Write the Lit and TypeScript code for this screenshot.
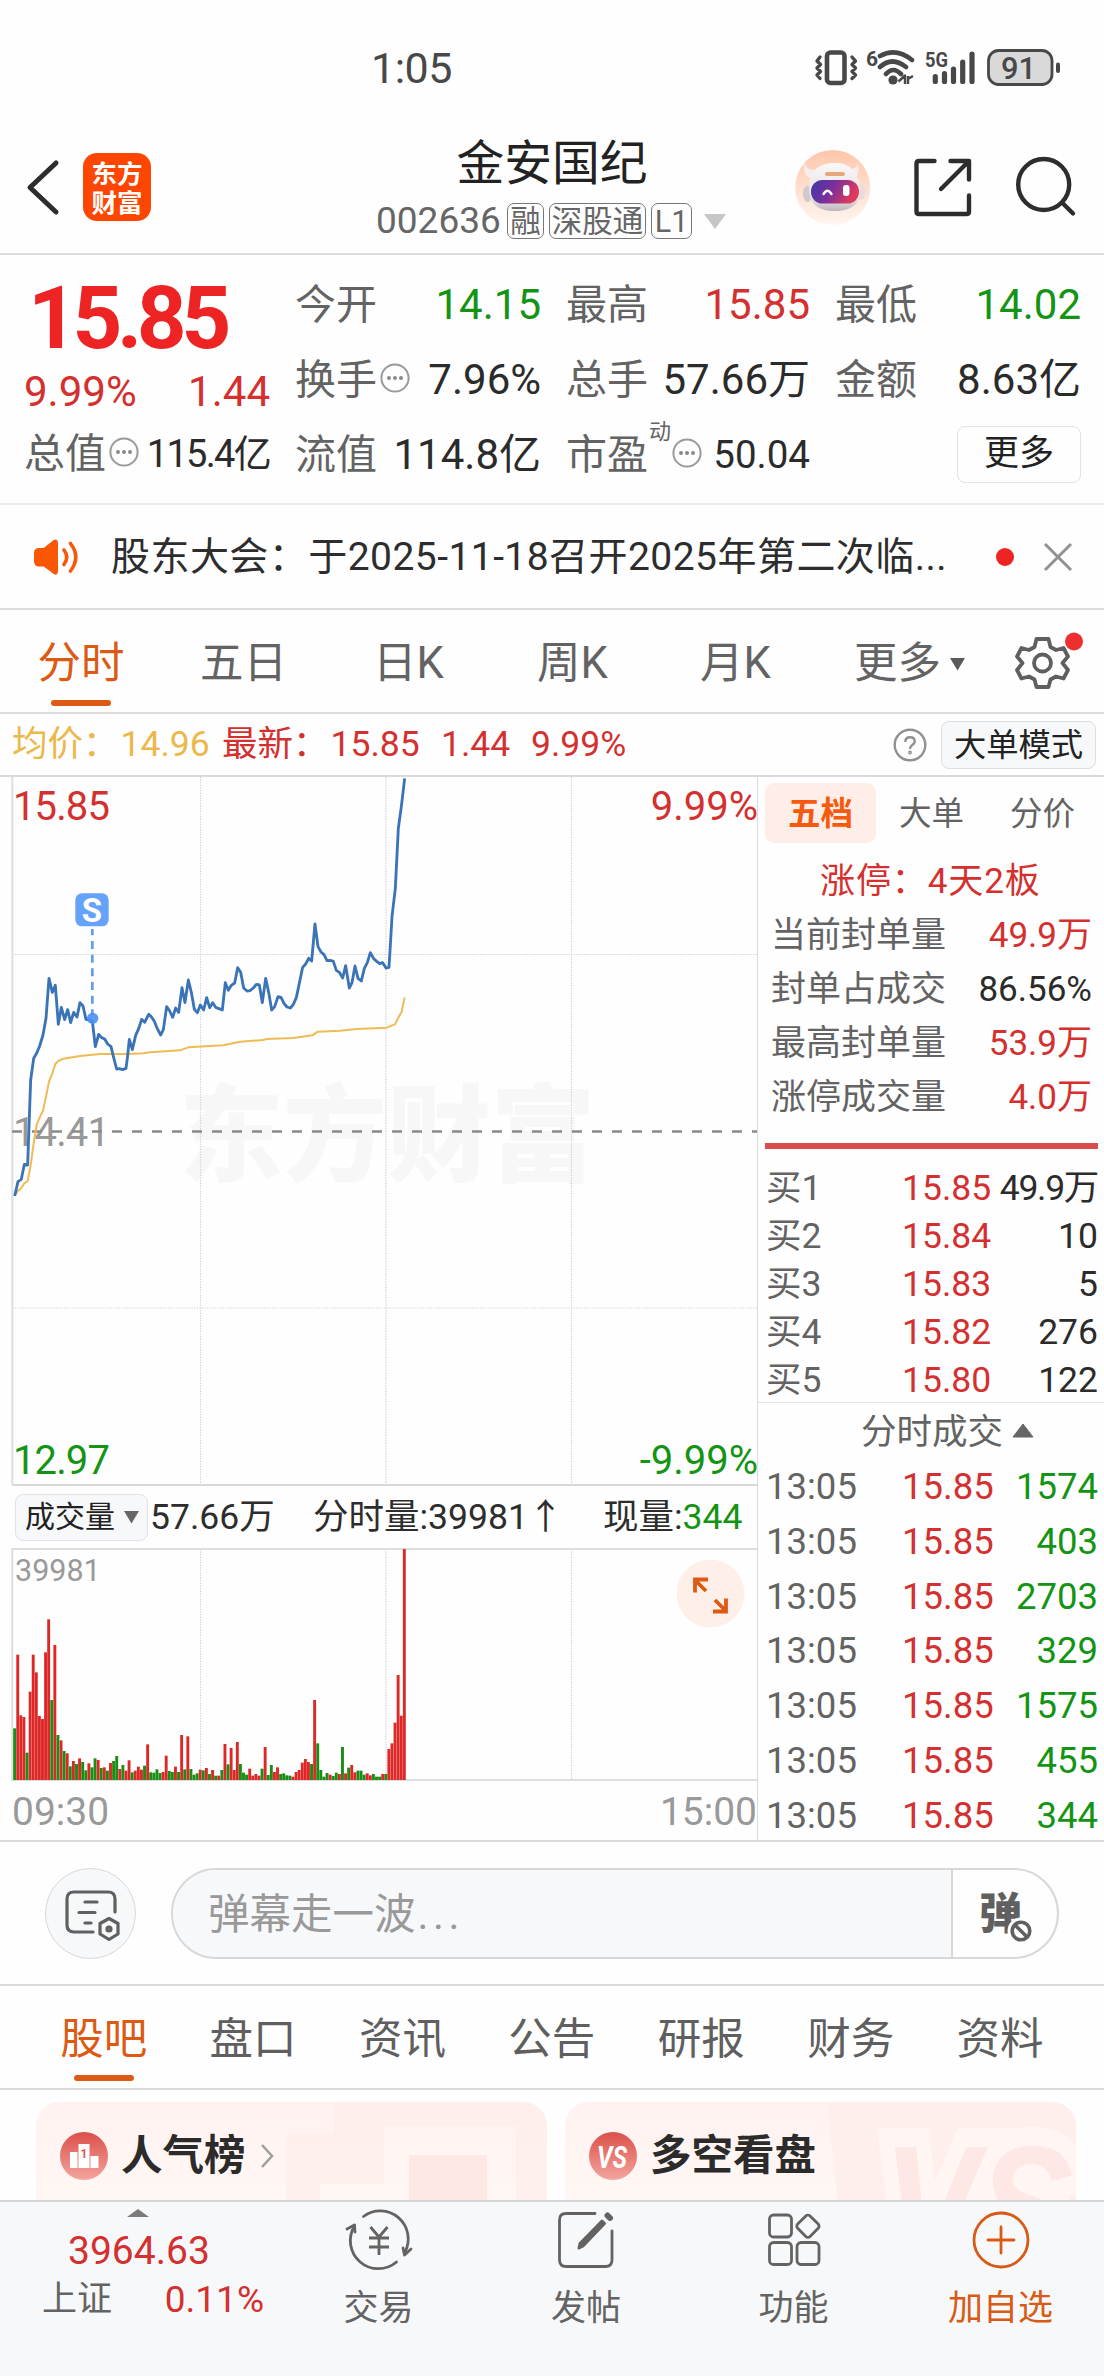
import { LitElement, html, svg, css } from "lit";
import { customElement } from "lit/decorators.js";

const PRICE =
  "44,1308 54,1265 64,1258 73,1213 83,1215 87,1100 92,960 101,895 110,880 119,858 129,825 138,775 147,655 157,697 166,676 175,793 184,742 194,779 203,749 212,788 221,757 231,771 240,728 249,738 258,778 267,780 277,783 286,860 296,823 305,833 314,837 323,852 333,860 342,897 350,927 358,926 368,929 378,925 382,895 388,838 397,869 407,826 416,806 425,778 434,787 446,763 453,769 463,784 472,806 482,825 490,809 500,740 509,753 518,772 527,744 536,757 546,683 555,728 565,660 574,697 583,748 592,758 601,735 611,750 620,713 629,743 638,728 648,743 657,746 667,750 676,668 685,691 694,676 704,669 713,623 722,637 731,684 741,693 750,692 760,684 769,673 778,675 787,728 797,655 806,697 815,750 824,740 834,710 843,712 852,730 861,741 871,744 880,733 889,713 898,670 908,622 917,612 926,595 935,603 945,492 954,560 963,576 972,584 981,602 991,601 1000,604 1009,631 1018,637 1028,654 1037,617 1048,684 1056,668 1065,618 1074,655 1084,663 1093,625 1102,608 1111,578 1121,596 1130,604 1139,611 1148,608 1158,624 1167,622 1172,540 1176,470 1186,385 1195,205 1204,140 1214,55";
const AVERAGE =
  "44,1306 54,1293 64,1284 73,1270 83,1263 92,1215 101,1150 110,1095 119,1073 129,1052 138,1010 147,965 157,940 166,912 175,903 190,896 240,888 300,882 380,882 430,880 450,877 540,871 565,862 670,856 720,845 790,840 800,837 880,834 937,826 953,815 1020,812 1070,807 1160,803 1185,793 1195,773 1205,755 1214,712";

/* One entry per minute: bar top and direction (r = up, g = down). */
const VOLUME =
  "745g 524r 706r 711r 818g 635r 524r 577r 708r 717r 517r 418r 660g 495r 765g 781r 813g 820r 859g 843r 852g 835r 846g 871g 850r 862g 835g 840r 864g 862r 872g 849r 843g 828g 867r 855g 872r 841r 877g 872r 860r 869r 857g 793r 877g 878g 868g 879g 876r 827r 873g 876g 860r 876g 765r 868g 769r 867g 884g 880g 869r 871g 864r 882g 870r 887g 887r 870g 792r 853g 804r 870r 786r 852g 878g 884g 866r 887r 882r 887r 866g 801r 885g 855g 876r 862r 882g 880g 886g 887g 890r 876r 870r 848r 837r 846r 852g 660r 790g 870g 890g 879g 884r 888g 878g 882r 801g 880r 863g 855r 877r 872g 872g 884g 880r 886r 882g 890g 890g 882r 882g 807r 790r 728r 585r 707r 207r".split(
    " "
  );

const SEAL = [
  ["当前封单量", "49.9万", "red"],
  ["封单占成交", "86.56%", "dark"],
  ["最高封单量", "53.9万", "red"],
  ["涨停成交量", "4.0万", "red"],
];
const BIDS = [
  ["买1", "15.85", "49.9万"],
  ["买2", "15.84", "10"],
  ["买3", "15.83", "5"],
  ["买4", "15.82", "276"],
  ["买5", "15.80", "122"],
];
const TRADES = ["1574", "403", "2703", "329", "1575", "455", "344"];

const base = css`
  * {
    box-sizing: border-box;
  }
  :host {
    display: block;
    font-family: Roboto, "Noto Sans CJK SC", sans-serif;
    line-height: 1.2;
  }
  svg {
    display: block;
    flex: none;
  }
  .red {
    color: #d3302f;
  }
  .green {
    color: #149414;
  }
  .dark {
    color: #2b2b2b;
  }
`;

const dots = html`<svg width="30" height="30" viewBox="0 0 30 30">
  <circle cx="15" cy="15" r="13.6" fill="none" stroke="#999" stroke-width="2" />
  <g fill="#8a8a8a"><circle cx="9" cy="15" r="2" /><circle cx="15" cy="15" r="2" /><circle cx="21" cy="15" r="2" /></g>
</svg>`;

@customElement("status-bar")
class StatusBar extends LitElement {
  static styles = [
    base,
    css`
      .bar {
        height: 120px;
        display: flex;
        align-items: flex-start;
        padding-top: 45px;
        color: #484848;
      }
      .clock {
        width: 443px;
        padding-left: 371px;
        font-size: 43px;
        line-height: 46px;
        margin-right: 368px;
        white-space: nowrap;
        letter-spacing: -0.5px;
      }
    `,
  ];
  render() {
    return html`<div class="bar">
      <div class="clock">1:05</div>
      <svg width="252" height="46" viewBox="811 45 252 46" fill="none" stroke="#484848" stroke-width="3.4" stroke-linecap="round" stroke-linejoin="round">
        <rect x="827" y="52.5" width="17.5" height="30.5" rx="3.5" stroke-width="4.6" />
        <path d="M820 57 l-3 4 3.500 3.500 -3.500 3.500 3.500 3.500 -3.500 3.500 3 3.500 M852 57 l3.500 4 -3.500 3.500 3.500 3.500 -3.500 3.500 3.500 3.500 -3.500 3.500" />
        <text x="866" y="66" font-size="21" font-weight="700" fill="#484848" stroke="none" textLength="11">6</text>
        <g stroke-width="4.600">
          <path d="M880 56 Q896 47 912 60 M880 67 Q892 56 906 67 M886 74 Q893 66 901 74" />
        </g>
        <circle cx="893" cy="80" r="4.600" fill="#484848" stroke="none" />
        <path d="M898.500 81.500 L905 75.500 V84 M908 76 V84 M908 79 L913 76" stroke-width="2.400" stroke-linecap="butt" />
        <text x="925" y="67" font-size="21" font-weight="700" fill="#484848" stroke="none" textLength="23" lengthAdjust="spacingAndGlyphs">5G</text>
        <path d="M935.300 76.500 V81.500 M944.500 73.500 V81.500 M953.500 69 V81.500 M962.700 62 V81.500 M972 54 V81.500" stroke-width="5.200" />
        <rect x="988.500" y="50.500" width="63.500" height="34" rx="10" fill="#d9d9d9" stroke-width="2.800" />
        <path d="M1058 64.500 V71" stroke-width="4" />
        <text x="1001" y="79" font-size="32" font-weight="500" fill="#484848" stroke="none" textLength="35" lengthAdjust="spacingAndGlyphs">91</text>
      </svg>
    </div>`;
  }
}

@customElement("stock-header")
class StockHeader extends LitElement {
  static styles = [
    base,
    css`
      .head {
        height: 135px;
        display: flex;
        border-bottom: 2px solid #dcdcdc;
      }
      .left {
        width: 376px;
        display: flex;
        align-items: center;
        padding-left: 24px;
      }
      .logo {
        width: 68px;
        height: 68px;
        margin-left: 21px;
        border-radius: 14px;
        background: #ff4600;
        color: #fff;
        font: 700 25.500px/29px "Noto Sans CJK SC", sans-serif;
        text-align: center;
        padding-top: 4px;
      }
      .mid {
        width: 352px;
      }
      .name {
        font-size: 47.800px;
        line-height: 60px;
        margin-top: 14px;
        text-align: center;
        color: #222;
      }
      .code {
        display: flex;
        align-items: center;
        height: 36px;
        margin-top: 9px;
        color: #666;
        font-size: 37px;
        gap: 5px;
      }
      .num {
        width: 126px;
      }
      .tag {
        border: 1.6px solid #777;
        border-radius: 7px;
        height: 36px;
        font-size: 30.5px;
        line-height: 35px;
        width: 37px;
        text-align: center;
        white-space: nowrap;
      }
      .wide {
        width: 97px;
      }
      .l1 {
        width: 41px;
      }
      .right {
        display: flex;
        align-items: center;
        padding-left: 67px;
      }
      .share {
        margin-left: 40px;
      }
      .search {
        margin-left: 40px;
      }
    `,
  ];
  render() {
    return html`<div class="head">
      <div class="left">
        <svg width="38" height="60" viewBox="24 157 38 60" fill="none" stroke="#2d2d2d" stroke-width="5" stroke-linecap="round" stroke-linejoin="round">
          <path d="M56 163 L30 187.500 L56 212" />
        </svg>
        <div class="logo">东方<br />财富</div>
      </div>
      <div class="mid">
        <div class="name">金安国纪</div>
        <div class="code">
          <span class="num">002636</span><span class="tag">融</span><span class="tag wide">深股通</span><span class="tag l1">L1</span>
          <svg width="30" height="18" viewBox="0 0 30 18"><path d="M7 2 H29 L18 17 Z" fill="#c6c6c6" /></svg>
        </div>
      </div>
      <div class="right">
        <svg width="76" height="76" viewBox="795 149 76 76">
          <defs>
            <linearGradient id="halo" x1="0" y1="0" x2="0" y2="1"><stop offset="0" stop-color="#ffc6aa" /><stop offset="1" stop-color="#fff6f0" /></linearGradient>
            <linearGradient id="face" x1="0" y1="0" x2="1" y2="0.3"><stop offset="0" stop-color="#3d3aa8" /><stop offset=".5" stop-color="#7a2f9c" /><stop offset="1" stop-color="#e03a5c" /></linearGradient>
            <linearGradient id="shell" x1="0" y1="0" x2="0" y2="1"><stop offset="0" stop-color="#fbf8f8" /><stop offset=".75" stop-color="#e6e0e2" /><stop offset="1" stop-color="#bdb7bd" /></linearGradient>
          </defs>
          <circle cx="832.700" cy="187.500" r="37.500" fill="url(#halo)" />
          <path d="M804 163 C803 172 806 178 812 178 L819 170 C811 171 806 168 804 163 Z M858 163 C860 172 857 178 853 178 L846 169 C853 170 857 168 858 163 Z" fill="#f4eeee" />
          <ellipse cx="807.500" cy="194" rx="4.500" ry="8" fill="#cfc8cc" /><ellipse cx="861" cy="192" rx="4.500" ry="8" fill="#e9dcdc" />
          <path d="M809 188 C809 170 820 163 835 163 C851 163 859 173 860 190 C861 204 851 211 835 211 C817 211 809 203 809 188 Z" fill="url(#shell)" />
          <rect x="811" y="180" width="48" height="23.500" rx="11.500" fill="url(#face)" />
          <rect x="825" y="172" width="20" height="4" rx="2" fill="#e6a878" />
          <path d="M823.500 194 Q827.500 187.500 831.500 194" fill="none" stroke="#fff" stroke-width="2.400" stroke-linecap="round" />
          <rect x="843" y="185" width="6.500" height="11" rx="3" fill="#fff" />
        </svg>
        <svg class="share" width="62" height="62" viewBox="909 156 62 62" fill="none" stroke="#2d2d2d" stroke-width="4.400" stroke-linecap="round" stroke-linejoin="round">
          <path d="M932.500 161 H917 Q914.500 161 914.500 163.500 V211.500 Q914.500 214 917 214 H964.500 Q967 214 967 211.500 V195.500 M948.500 161 H967 V179.500 M966 162 L939 189" />
        </svg>
        <svg class="search" width="66" height="66" viewBox="1012 154 66 66" fill="none" stroke="#2d2d2d" stroke-width="4.400" stroke-linecap="round">
          <circle cx="1042.700" cy="184.500" r="25.500" /><path d="M1061.500 203 L1072 213.500" />
        </svg>
      </div>
    </div>`;
  }
}

@customElement("quote-board")
class QuoteBoard extends LitElement {
  static styles = [
    base,
    css`
      .board {
        height: 250px;
        display: flex;
        padding: 13px 23px 0 24px;
        border-bottom: 2px solid #ececec;
        color: #2b2b2b;
        font-size: 42px;
      }
      .col {
        width: 246px;
        margin-right: 25px;
      }
      .lead {
        width: 246px;
      }
      .c3 {
        width: 244px;
      }
      .c4 {
        width: 246px;
        margin-right: 0;
      }
      .row {
        height: 75px;
        display: flex;
        justify-content: space-between;
        align-items: center;
        white-space: nowrap;
      }
      .label {
        display: flex;
        align-items: center;
        color: #636363;
        font-size: 41px;
      }
      .label svg {
        margin-left: 3px;
        margin-top: -6px;
      }
      .big {
        height: 99px;
        line-height: 100px;
        font-size: 87px;
        font-weight: 700;
        letter-spacing: -5.4px;
        color: #ee2323;
        padding-left: 4px;
      }
      .chg {
        height: 50px;
        display: flex;
        justify-content: space-between;
        align-items: center;
      }
      .s {
        font-size: 38.500px;
      }
      .tight {
        font-size: 38px;
        letter-spacing: -1.700px;
      }
      .dyn {
        font-size: 22px;
        align-self: flex-start;
        margin: -12px -2px 0 1px;
      }
      .more {
        margin-left: auto;
        width: 124px;
        height: 57px;
        line-height: 54px;
        margin-top: -3px;
        border: 1.500px solid #e0e2e3;
        border-radius: 8px;
        text-align: center;
        font-size: 35px;
        color: #222;
      }
    `,
  ];
  render() {
    return html`<div class="board">
      <div class="col lead">
        <div class="big">15.85</div>
        <div class="chg red"><span>9.99%</span><span>1.44</span></div>
        <div class="row"><span class="label">总值${dots}</span><span class="tight">115.4亿</span></div>
      </div>
      <div class="col">
        <div class="row"><span class="label">今开</span><span class="green">14.15</span></div>
        <div class="row"><span class="label">换手${dots}</span><span>7.96%</span></div>
        <div class="row"><span class="label">流值</span><span>114.8亿</span></div>
      </div>
      <div class="col c3">
        <div class="row"><span class="label">最高</span><span class="red">15.85</span></div>
        <div class="row"><span class="label">总手</span><span>57.66万</span></div>
        <div class="row"><span class="label">市盈<span class="dyn">动</span>${dots}</span><span class="s">50.04</span></div>
      </div>
      <div class="col c4">
        <div class="row"><span class="label">最低</span><span class="green">14.02</span></div>
        <div class="row"><span class="label">金额</span><span>8.63亿</span></div>
        <div class="row"><span class="more">更多</span></div>
      </div>
    </div>`;
  }
}

@customElement("notice-line")
class NoticeLine extends LitElement {
  static styles = [
    base,
    css`
      .line {
        height: 105px;
        display: flex;
        align-items: center;
        border-bottom: 2px solid #dcdcdc;
        padding-left: 32px;
      }
      .text {
        width: 842px;
        margin-left: 31px;
        font-size: 39px;
        letter-spacing: 0.450px;
        color: #2d2d2d;
        white-space: nowrap;
        line-height: 50px;
      }
      .dot {
        width: 18px;
        height: 18px;
        margin: 1px 27px 0 43px;
        border-radius: 50%;
        background: #ee2323;
      }
    `,
  ];
  render() {
    return html`<div class="line">
      <svg width="48" height="40" viewBox="32 536 48 40" fill="none" stroke="#f95706" stroke-width="3.600" stroke-linecap="round">
        <path d="M38 548 H44 L54 540 Q57 538.500 57 542 V570 Q57 574 54 572 L44 564.500 H39 Q35 564.500 35 560 V552 Q35 548 39 548 Z" fill="#f95706" stroke-width="2" />
        <path d="M64 549 Q69.500 556 64 563.500 M70.500 542.500 Q81 556 70.500 570" />
      </svg>
      <div class="text">股东大会：于2025-11-18召开2025年第二次临...</div>
      <span class="dot"></span>
      <svg width="34" height="34" viewBox="0 0 34 34" stroke="#919191" stroke-width="3"><path d="M4 4 L30 30 M30 4 L4 30" /></svg>
    </div>`;
  }
}

@customElement("period-tabs")
class PeriodTabs extends LitElement {
  static styles = [
    base,
    css`
      .tabs {
        height: 104px;
        display: grid;
        grid-template-columns: 162px 163px 167px 161px 165px 174px 1fr;
        align-items: center;
        border-bottom: 2px solid #dcdcdc;
        color: #636363;
        font-size: 43.500px;
        line-height: 102px;
        text-align: center;
      }
      .tabs > span {
        padding-top: 3px;
      }
      .on {
        color: #dc5a14;
        display: flex;
        flex-direction: column;
        align-items: center;
      }
      .on::after {
        content: "";
        width: 60px;
        height: 6px;
        border-radius: 3px;
        background: #dc5a14;
        margin-top: -15px;
        margin-bottom: 9px;
      }
      .more {
        display: flex;
        align-items: center;
        justify-content: flex-end;
        padding-right: 26px;
        gap: 8px;
      }
      .gear {
        margin-left: 8px;
      }
    `,
  ];
  render() {
    return html`<div class="tabs">
      <span class="on">分时</span><span>五日</span><span>日K</span><span>周K</span><span>月K</span>
      <span class="more">更多<svg width="17" height="14" viewBox="0 0 17 14"><path d="M1 1 H16 L8.500 13.500 Z" fill="#5a5a5a" /></svg></span>
      <svg class="gear" width="92" height="80" viewBox="1000 621.500 92 80" fill="none" stroke="#5f5f5f" stroke-width="3.800" stroke-linejoin="round">
        <path d="M1036.500 637.500 H1048.500 L1050.500 645.500 L1056 648.500 L1063.500 646.500 L1068 655 L1062.500 661.500 L1068 668.500 L1063.500 677 L1056 675 L1050.500 678 L1048.500 685.500 H1036.500 L1034.500 678 L1029 675 L1021.500 677 L1017 668.500 L1022.500 661.500 L1017 655 L1021.500 646.500 L1029 648.500 L1034.500 645.500 Z" />
        <circle cx="1042.500" cy="661.500" r="8.500" />
        <circle cx="1074" cy="640" r="9" fill="#ee2f2f" stroke="none" />
      </svg>
    </div>`;
  }
}

@customElement("info-row")
class InfoRow extends LitElement {
  static styles = [
    base,
    css`
      .row {
        height: 63px;
        display: flex;
        align-items: center;
        padding-left: 12px;
        font-size: 35.500px;
        border-bottom: 2px solid #d9dadb;
        white-space: nowrap;
      }
      .avg {
        width: 210px;
        color: #ebb84a;
      }
      .gap {
        margin-left: 2px;
      }
      .group {
        width: 412px;
        display: flex;
        flex: none;
      }
      .last {
        width: 219px;
        flex: none;
      }
      .chg {
        width: 90px;
        flex: none;
      }
      svg {
        margin-left: 259px;
      }
      .mode {
        margin-left: 14px;
        width: 155px;
        height: 48px;
        line-height: 47px;
        border: 1.500px solid #dcdee0;
        border-radius: 8px;
        background: #f7f8fa;
        font-size: 32.300px;
        text-align: center;
        color: #222;
      }
    `,
  ];
  render() {
    return html`<div class="row">
      <span class="avg">均价：<span class="gap">14.96</span></span>
      <span class="group red"><span class="last">最新：<span class="gap">15.85</span></span><span class="chg">1.44</span><span>9.99%</span></span>
      <svg width="34" height="34" viewBox="0 0 34 34" fill="none" stroke="#919191" stroke-width="2.400">
        <circle cx="17" cy="17" r="15.300" /><path d="M12.300 14 Q12.300 9.300 17 9.300 Q21.700 9.300 21.700 13.300 Q21.700 15.600 19 17.200 Q17 18.500 17 21" /><circle cx="17" cy="24.500" r="0.700" />
      </svg>
      <span class="mode">大单模式</span>
    </div>`;
  }
}

@customElement("minute-chart")
class MinuteChart extends LitElement {
  static styles = [
    base,
    css`
      :host {
        width: 757px;
      }
      .vol-head {
        height: 62px;
        display: flex;
        align-items: center;
        padding-left: 15px;
        font-size: 35.500px;
        color: #2d2d2d;
        white-space: nowrap;
      }
      .pick {
        width: 133px;
        height: 47px;
        display: flex;
        align-items: center;
        gap: 9px;
        border: 1.500px solid #e0e2e5;
        border-radius: 8px;
        background: #f7f8fa;
        padding-left: 9px;
        font-size: 30px;
        color: #222;
        margin-right: 2px;
      }
      .total {
        width: 163px;
      }
      .minute {
        width: 290px;
      }
      .times {
        height: 58px;
        display: flex;
        justify-content: space-between;
        align-items: center;
        padding: 2px 0 0 12px;
        font-size: 39px;
        color: #999;
      }
      text {
        font-family: Roboto, "Noto Sans CJK SC", sans-serif;
      }
    `,
  ];
  grid(y1: number, y2: number) {
    return [200.5, 386, 571.5].map(
      (x) => svg`<path d="M${x} ${y1} V${y2}" stroke="#d2d2d2" stroke-width="1.2" stroke-dasharray="1.3 1.3"/>`
    );
  }
  render() {
    return html`
      <svg width="757" height="709" viewBox="0 777 757 709">
        <text x="179" y="1173" font-size="106" font-weight="900" fill="#f7f7f7" textLength="416" lengthAdjust="spacingAndGlyphs">东方财富</text>
        ${this.grid(777, 1484)}
        <path d="M12 954.500 H757 M12 1308 H757" stroke="#d2d2d2" stroke-width="1.200" stroke-dasharray="1.300 1.300" />
        <path d="M12.300 777 V1485" stroke="#dedede" stroke-width="2" />
        <path d="M12 1485 H757" stroke="#d9d9d9" stroke-width="2" />
        <text x="13" y="1146" font-size="40" letter-spacing="-0.9" fill="#999">14.41</text>
        <path d="M12 1131.500 H757" stroke="#8a8a8a" stroke-width="2.400" stroke-dasharray="10 10" />
        <g transform="translate(0 760) scale(.33333)" fill="none" stroke-linejoin="round">
          <polyline points=${AVERAGE} stroke="#efbb55" stroke-width="6" />
          <polyline points=${PRICE} stroke="#3a74b6" stroke-width="8.500" />
          <path d="M277 507 V765" stroke="#5f9df0" stroke-width="8" stroke-dasharray="24 17" stroke-dashoffset="5" />
          <circle cx="278" cy="775" r="17" fill="#4a8ff5" fill-opacity=".9" />
          <rect x="226" y="400" width="100" height="99" rx="20" fill="#65a3fb" />
        </g>
        <text x="92" y="922" font-size="33" font-weight="700" fill="#fff" text-anchor="middle">S</text>
        <g font-size="40">
          <text x="13" y="819.500" letter-spacing="-0.9" fill="#d3302f">15.85</text>
          <text x="758" y="819.500" fill="#d3302f" text-anchor="end">9.99%</text>
          <text x="13" y="1474" letter-spacing="-0.9" fill="#149414">12.97</text>
          <text x="758" y="1474" fill="#149414" text-anchor="end">-9.99%</text>
        </g>
      </svg>
      <div class="vol-head">
        <span class="pick">成交量<svg width="15" height="13" viewBox="0 0 15 13"><path d="M0 0 H15 L7.500 12.500 Z" fill="#666" /></svg></span>
        <span class="total">57.66万</span><span class="minute">分时量:39981↑</span><span>现量:<span class="green">344</span></span>
      </div>
      <svg width="757" height="234" viewBox="0 1548 757 234">
        ${this.grid(1549, 1780)}
        <path d="M12.300 1781 V1549 H757 M12 1780 H757" fill="none" stroke="#dedede" stroke-width="2" />
        ${VOLUME.map((v, i) => {
          const top = 1480 + parseInt(v) / 3;
          return svg`<rect x=${13.2 + i * 3.0926} y=${top} width="2.9" height=${1780 - top} fill=${v.endsWith("r") ? "#dd2828" : "#1b8c14"}/>`;
        })}
        <text x="15" y="1581" font-size="30.500" fill="#999">39981</text>
        <circle cx="710.500" cy="1593.500" r="34" fill="#fef0e9" />
        <path d="M706 1591 L695 1580 M695 1592.500 V1579.500 H708 M715 1600 L726 1611 M726 1598.500 V1611.500 H713" fill="none" stroke="#dc5a14" stroke-width="3.800" />
      </svg>
      <div class="times"><span>09:30</span><span>15:00</span></div>
    `;
  }
}

@customElement("order-panel")
class OrderPanel extends LitElement {
  static styles = [
    base,
    css`
      :host {
        flex: 1;
        border-left: 1.500px solid #d9dadb;
        white-space: nowrap;
        color: #636363;
        font-size: 35px;
      }
      .tabs {
        display: flex;
        padding: 6px 0 0 7px;
        font-size: 32.500px;
        line-height: 62px;
        height: 66px;
        text-align: center;
      }
      .tabs span {
        width: 111px;
      }
      .tabs .on {
        background: #feeee7;
        border-radius: 9px;
        color: #f55a0f;
        font-weight: 700;
      }
      .limit {
        line-height: 52px;
        height: 66px;
        padding: 13px 0 0 62px;
        letter-spacing: 0.900px;
      }
      .seal {
        display: flex;
        justify-content: space-between;
        height: 54px;
        line-height: 54px;
        padding: 0 12px 0 13px;
      }
      .bar {
        height: 6px;
        background: #da4d4d;
        margin: 18px 6px 15px 7px;
      }
      .bid,
      .trade {
        display: grid;
        grid-template-columns: 136px 90px 1fr;
        height: 48px;
        line-height: 48px;
        padding: 0 6px 0 8px;
        font-size: 36.500px;
      }
      .bid {
        font-size: 35.500px;
      }
      .bid.wan .q {
        letter-spacing: -1.300px;
        padding-right: 0;
      }
      .trade {
        height: 54.800px;
        line-height: 54.800px;
        padding-right: 6px;
      }
      .q {
        text-align: right;
        margin-left: -10px;
      }
      .title {
        border-top: 1.500px solid #e4e4e4;
        height: 58px;
        line-height: 58px;
        display: flex;
        align-items: center;
        padding-left: 103px;
        margin-top: -2px;
        gap: 9px;
        font-size: 35.500px;
      }
      .title svg {
        margin-top: -2px;
      }
    `,
  ];
  render() {
    return html`
      <div class="tabs"><span class="on">五档</span><span>大单</span><span>分价</span></div>
      <div class="limit red">涨停：4天2板</div>
      ${SEAL.map(([k, v, c]) => html`<div class="seal"><span>${k}</span><span class=${c}>${v}</span></div>`)}
      <div class="bar"></div>
      ${BIDS.map(
        ([k, p, q]) =>
          html`<div class="bid ${q.endsWith("万") ? "wan" : ""}"><span>${k}</span><span class="red">${p}</span><span class="q dark">${q}</span></div>`
      )}
      <div class="title">分时成交<svg width="22" height="16" viewBox="0 0 22 16"><path d="M1 14 L11 1 L21 14 Z" fill="#666" stroke="#666" stroke-linejoin="round" /></svg></div>
      ${TRADES.map((q) => html`<div class="trade"><span>13:05</span><span class="red">15.85</span><span class="q green">${q}</span></div>`)}
    `;
  }
}

@customElement("danmu-bar")
class DanmuBar extends LitElement {
  static styles = [
    base,
    css`
      .bar {
        height: 146px;
        display: flex;
        align-items: center;
        padding-left: 45px;
        padding-top: 1px;
        border-top: 2px solid #d9dadb;
        border-bottom: 2px solid #d9dadb;
      }
      .round {
        width: 91px;
        height: 91px;
        border: 1.500px solid #d6d8da;
        border-radius: 50%;
        background: #f7f8fa;
        display: flex;
        align-items: center;
        justify-content: center;
      }
      .field {
        width: 888px;
        height: 91px;
        margin-left: 35px;
        border: 2px solid #d6d8da;
        border-radius: 46px;
        display: flex;
        overflow: hidden;
      }
      .input {
        width: 781px;
        background: #f7f8fa;
        border-right: 2px solid #d6d8da;
        padding-left: 35px;
        line-height: 90px;
        font-size: 41.500px;
        color: #999;
      }
      .dots {
        letter-spacing: 4.500px;
        margin-left: 2px;
      }
      text {
        font-family: "Noto Sans CJK SC", sans-serif;
      }
    `,
  ];
  render() {
    return html`<div class="bar">
      <div class="round">
        <svg width="60" height="60" viewBox="60 1884 60 60" fill="none" stroke="#606060" stroke-width="3.200" stroke-linecap="round" stroke-linejoin="round">
          <path d="M92 1932 H73 Q66 1932 66 1925 V1899 Q66 1892 73 1892 H107 Q114 1892 114 1899 V1912" />
          <path d="M84 1902 H96 M78 1912.500 H94 M84 1923 H90" />
          <path d="M108 1918.500 L117 1923.500 V1934 L108 1939.500 L99 1934 V1923.500 Z" />
          <circle cx="108" cy="1929" r="2" />
        </svg>
      </div>
      <div class="field">
        <div class="input">弹幕走一波<span class="dots">...</span></div>
        <svg width="104" height="87" viewBox="954 1870 104 87">
          <text x="980" y="1928.500" font-size="43" font-weight="900" fill="#606060">弹</text>
          <circle cx="1022" cy="1931" r="13.500" fill="#fff" />
          <circle cx="1022" cy="1931" r="8.800" fill="none" stroke="#606060" stroke-width="3.600" />
          <path d="M1016 1925 L1028 1937" stroke="#606060" stroke-width="3.600" />
        </svg>
      </div>
    </div>`;
  }
}

@customElement("section-tabs")
class SectionTabs extends LitElement {
  static styles = [
    base,
    css`
      .tabs {
        height: 104px;
        display: grid;
        grid-template-columns: repeat(7, 149.400px);
        padding-left: 29px;
        border-bottom: 2px solid #d9dadb;
        font-size: 43.500px;
        line-height: 107px;
        text-align: center;
        color: #5f5f5f;
      }
      .on {
        color: #dc5a14;
        display: flex;
        flex-direction: column;
        align-items: center;
      }
      .on::after {
        content: "";
        width: 60px;
        height: 6px;
        border-radius: 3px;
        background: #dc5a14;
        margin-top: -18px;
      }
    `,
  ];
  render() {
    return html`<div class="tabs">
      ${["股吧", "盘口", "资讯", "公告", "研报", "财务", "资料"].map((t, i) => html`<span class=${i === 0 ? "on" : ""}>${t}</span>`)}
    </div>`;
  }
}

@customElement("promo-cards")
class PromoCards extends LitElement {
  static styles = [
    base,
    css`
      .wrap {
        height: 110px;
        padding: 12px 28px 0 36px;
        display: grid;
        grid-template-columns: 511px 511px;
        gap: 18px;
        overflow: hidden;
      }
      .card {
        display: grid;
        height: 110px;
        border-radius: 24px 24px 0 0;
        background: linear-gradient(#fff2f0, #fff8f5);
        overflow: hidden;
      }
      .bg,
      .body {
        grid-area: 1 / 1;
      }
      .body {
        display: flex;
        align-items: center;
        height: 108px;
        padding-left: 24px;
        font-size: 41.500px;
        font-weight: 700;
        color: #2b2b2b;
      }
      .body span {
        margin: 0 14px 0 13px;
      }
    `,
  ];
  render() {
    const disc = svg`<defs><linearGradient id="d" x1="0" y1="0" x2="0" y2="1"><stop offset="0" stop-color="#db4f4a"/><stop offset="1" stop-color="#f3a59e"/></linearGradient></defs><circle cx="24" cy="24" r="24" fill="url(#d)"/>`;
    return html`<div class="wrap">
      <div class="card">
        <svg class="bg" width="511" height="110" viewBox="0 0 511 110">
          <path d="M250 32 H297 V0 H511 V110 H480 V24 H348 V82 H284 V110 H250 Z" fill="#feeeeb" opacity=".75" />
          <path d="M373 53 H451 V110 H373 Z" fill="#fde8e5" />
        </svg>
        <div class="body">
          <svg width="48" height="48" viewBox="0 0 48 48">
            ${disc}
            <path d="M10 20 H17.500 V36 H10 Z M18.500 12 H29.500 V36 H18.500 Z M30.500 24 H38.500 V36 H30.500 Z" fill="#fff" />
            <text x="24" y="26" font-size="12" font-weight="700" fill="#dc5650" text-anchor="middle">1</text>
          </svg>
          <span>人气榜</span>
          <svg width="14" height="26" viewBox="0 0 14 26" fill="none" stroke="#a0a0a0" stroke-width="2.600"><path d="M2 2 L12 13 L2 24" /></svg>
        </div>
      </div>
      <div class="card">
        <svg class="bg" width="511" height="110" viewBox="0 0 511 110">
          <path d="M262 0 H511 V110 H274 Z" fill="#feefed" />
          <text x="318" y="168" font-family="Liberation Sans" font-size="178" font-style="italic" font-weight="700" fill="#fde8e5" stroke="#fff5f2" stroke-width="38" paint-order="stroke" textLength="190" lengthAdjust="spacingAndGlyphs">VS</text>
        </svg>
        <div class="body">
          <svg width="48" height="48" viewBox="0 0 48 48">
            ${disc}
            <text x="8" y="35.500" font-size="31" font-style="italic" font-weight="700" fill="#fff" textLength="30" lengthAdjust="spacingAndGlyphs">VS</text>
          </svg>
          <span>多空看盘</span>
        </div>
      </div>
    </div>`;
  }
}

@customElement("bottom-nav")
class BottomNav extends LitElement {
  static styles = [
    base,
    css`
      .nav {
        height: 176px;
        display: grid;
        grid-template-columns: 275px 207px 208px 207px 207px;
        background: #f7f8fa;
        border-top: 2px solid #d3d5d8;
        color: #636363;
      }
      .index {
        padding: 6px 11px 0 42px;
      }
      .arrow {
        margin-left: 85px;
      }
      .value {
        font-size: 39px;
        line-height: 46px;
        margin-top: 11px;
        padding-left: 26px;
        color: #d3302f;
      }
      .pair {
        display: flex;
        justify-content: space-between;
        font-size: 35px;
        line-height: 46px;
        margin-top: 3px;
      }
      .pair .red {
        font-size: 37px;
      }
      .item {
        display: flex;
        flex-direction: column;
        align-items: center;
        padding-top: 6px;
        font-size: 35px;
        line-height: 50px;
        gap: 12px;
      }
      .item svg {
        fill: none;
        stroke: #636363;
        stroke-width: 2.800;
        stroke-linecap: round;
        stroke-linejoin: round;
      }
      .add {
        color: #d85a14;
      }
      .add svg {
        stroke: #d85a14;
      }
    `,
  ];
  render() {
    return html`<div class="nav">
      <div class="index">
        <svg class="arrow" width="22" height="9" viewBox="0 0 22 9"><path d="M0 9 L11 1 L22 9 Z" fill="#7a7a7a" /></svg>
        <div class="value">3964.63</div>
        <div class="pair"><span>上证</span><span class="red">0.11%</span></div>
      </div>
      <div class="item">
        <svg width="70" height="64" viewBox="-35 -32 70 64">
          <path d="M-15.500 -23.500 A28 28 0 0 1 26 12 M17.500 22 A28 28 0 0 1 -24.500 -14" />
          <path d="M-32 -11 L-24.500 -15 L-24 -8 M32 9 L25.500 15 L24 8" />
          <path d="M-8.500 -13 L0 -3 L8.500 -13 M0 -3 V15 M-10 -2 H10 M-10 7 H10" stroke-linecap="butt" />
        </svg>
        交易
      </div>
      <div class="item">
        <svg width="64" height="64" viewBox="-32 -32 64 64">
          <path d="M9 -26.500 H-20 Q-26.500 -26.500 -26.500 -20 V20 Q-26.500 26.500 -20 26.500 H19.500 Q26 26.500 26 20 V-9" />
          <path d="M-7 8 L-6 3.500 L16 -19 L18.500 -16.500 L-3 6 Z" fill="#636363" stroke-width="3" /><path d="M21.500 -24.500 L24 -22" stroke-width="6" />
        </svg>
        发帖
      </div>
      <div class="item">
        <svg width="64" height="64" viewBox="-32 -32 64 64">
          <rect x="-24.500" y="-25" width="22" height="22" rx="4" /><rect x="-24.500" y="2.500" width="22" height="22" rx="4" /><rect x="3" y="2.500" width="22" height="22" rx="4" />
          <rect x="5.200" y="-22.500" width="17.500" height="17.500" rx="3" transform="rotate(45 14 -13.800)" />
        </svg>
        功能
      </div>
      <div class="item add">
        <svg width="64" height="64" viewBox="-32 -32 64 64"><circle r="27" /><path d="M-13 0 H13 M0 -13 V13" /></svg>
        加自选
      </div>
    </div>`;
  }
}

@customElement("app-root")
class AppRoot extends LitElement {
  static styles = [
    base,
    css`
      :host {
        width: 1104px;
        height: 2376px;
        overflow: hidden;
        background: #fefefe;
      }
      .main {
        display: flex;
        height: 1063px;
      }
    `,
  ];
  render() {
    return html`
      <status-bar></status-bar>
      <stock-header></stock-header>
      <quote-board></quote-board>
      <notice-line></notice-line>
      <period-tabs></period-tabs>
      <info-row></info-row>
      <div class="main"><minute-chart></minute-chart><order-panel></order-panel></div>
      <danmu-bar></danmu-bar>
      <section-tabs></section-tabs>
      <promo-cards></promo-cards>
      <bottom-nav></bottom-nav>
    `;
  }
}
